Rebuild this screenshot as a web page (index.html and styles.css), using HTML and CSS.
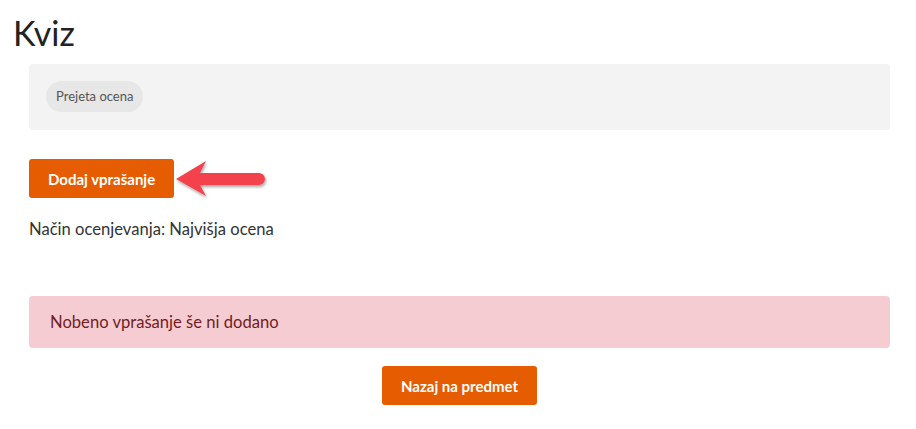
FILE: index.html
```html
<!DOCTYPE html>
<html lang="sl">
<head>
  <meta charset="UTF-8" />
  <meta name="viewport" content="width=device-width, initial-scale=1.0"/>
  <title>Kviz</title>
  <link rel="stylesheet" href="styles.css">
</head>
<body>
  <div class="page">
    <h1>Kviz</h1>

    <div class="content">
      <div class="info-box">
        <span class="chip">Prejeta ocena</span>
      </div>

      <div class="add-row">
        <button class="btn">Dodaj vprašanje</button>
        <svg class="pointer" width="100" height="50" viewBox="0 0 100 50">
          <defs>
            <filter id="shadow" x="-20%" y="-40%" width="140%" height="180%">
              <feDropShadow dx="1" dy="2" stdDeviation="1.5" flood-color="#000" flood-opacity="0.35"/>
            </filter>
          </defs>
          <path filter="url(#shadow)" fill="#f4424d"
                d="M6,24 L36,6 L30,18 L89,18 A6,6 0 0 1 89,30 L30,30 L36,41 Z"/>
        </svg>
      </div>

      <p class="grading">Način ocenjevanja: Najvišja ocena</p>

      <div class="alert">Nobeno vprašanje še ni dodano</div>

      <div class="back">
        <button class="btn">Nazaj na predmet</button>
      </div>
    </div>
  </div>
</body>
</html>
```

FILE: styles.css
```css
body { margin: 0; background: #fff; font-family: Lato, "Noto Sans", sans-serif; color: #333; }
.page { padding: 0 13px; }
h1 { font-size: 34px; font-weight: 400; margin: 0; padding-top: 11px; line-height: 44px; color: #222; }
.content { margin: 9px 13px 0 16px; }
.info-box { background: #f3f3f3; border-radius: 4px; height: 66px; padding: 17px; box-sizing: border-box; }
.chip { display: inline-block; background: #e7e7e7; color: #555; font-size: 13px; line-height: 31px; padding: 0 10px; border-radius: 16px; }
.add-row { position: relative; margin-top: 29px; height: 39px; }
.btn { background: #e65c00; color: #fff; border: none; border-radius: 3px; font-family: inherit; font-size: 15px; font-weight: 700; height: 39px; padding: 0 19px; cursor: pointer; }
.pointer { position: absolute; left: 141px; top: -4px; }
.grading { font-size: 16.6px; margin: 20px 0 0; line-height: 22px; }
.alert { background: #f5ccd1; color: #721c24; border-radius: 4px; margin-top: 56px; height: 52px; padding: 0 21px; display: flex; align-items: center; font-size: 16.6px; }
.back { display: flex; justify-content: center; margin-top: 18px; }
```
